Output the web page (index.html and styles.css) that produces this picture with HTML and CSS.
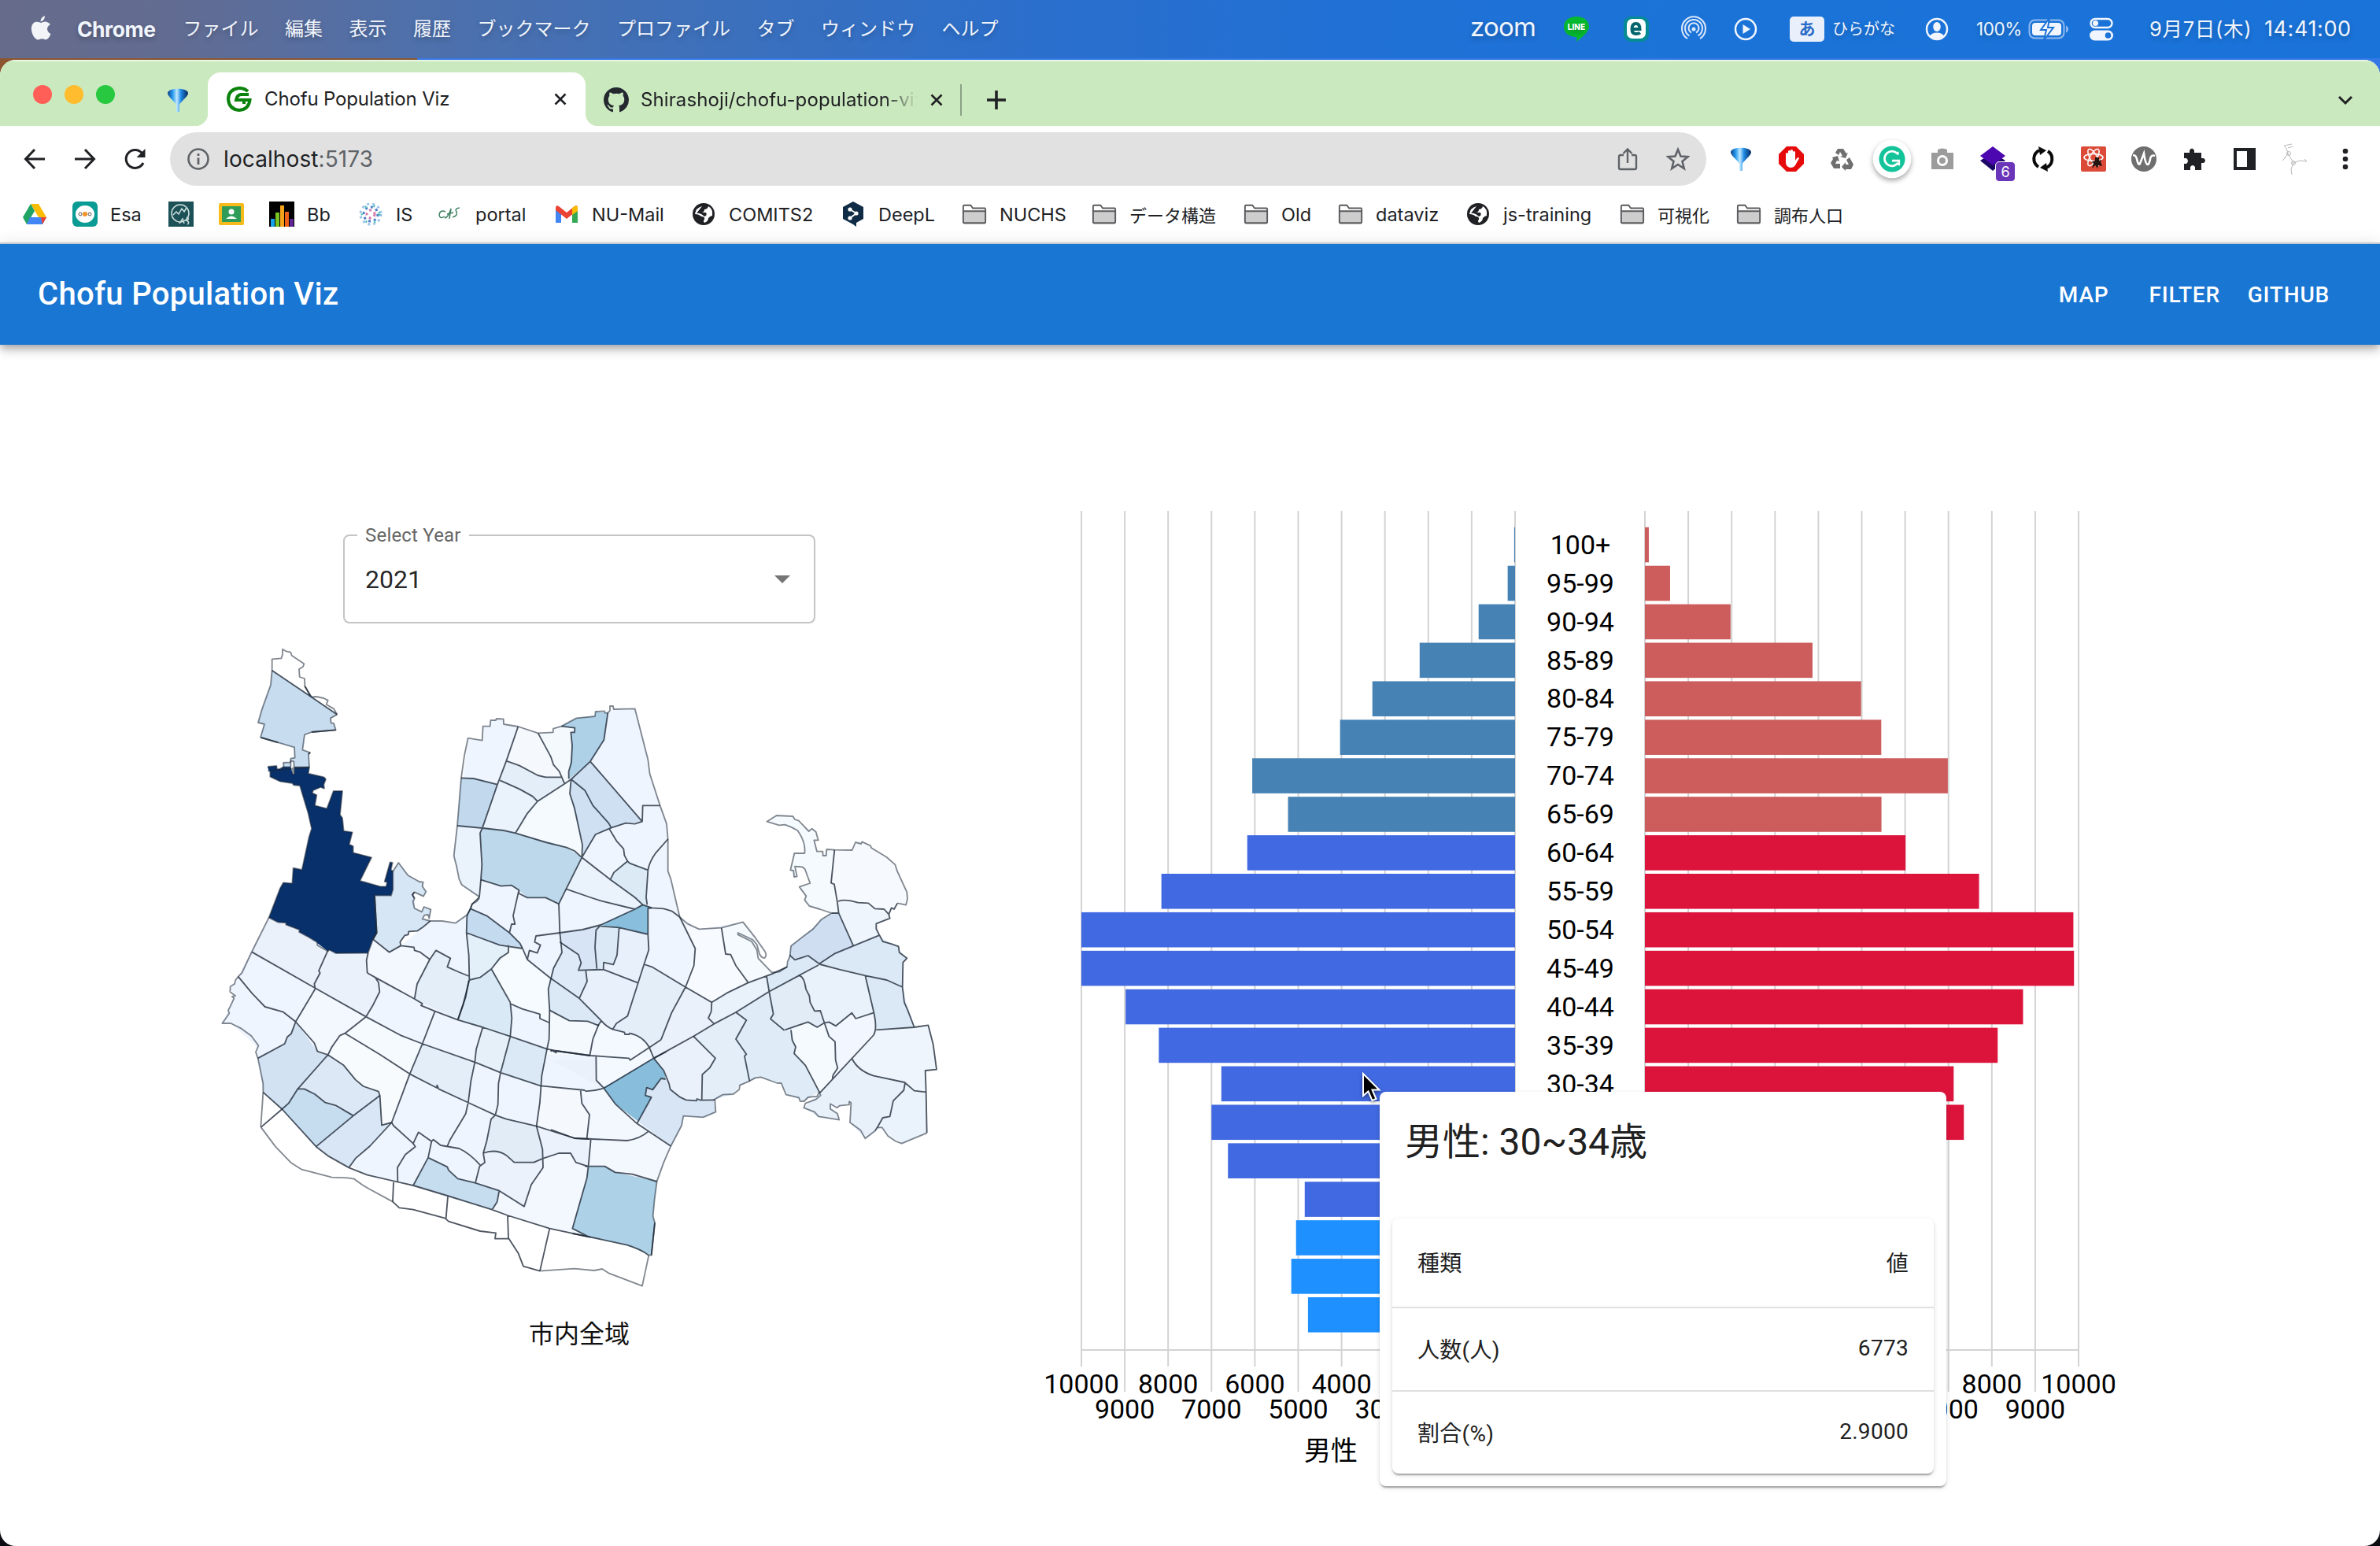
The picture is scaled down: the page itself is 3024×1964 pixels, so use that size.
FILE: index.html
```html
<!DOCTYPE html>
<html lang="ja">
<head>
<meta charset="utf-8">
<title>Chofu Population Viz</title>
<link rel="stylesheet" href="styles.css">
</head>
<body>
<svg width="0" height="0" class="defs">
  <defs>
    <linearGradient id="bal" x1="0" x2="1"><stop offset="0" stop-color="#0a3f86"/><stop offset=".25" stop-color="#2b9df0"/><stop offset=".45" stop-color="#bfe8ff"/><stop offset=".65" stop-color="#1f8ae6"/><stop offset="1" stop-color="#06265c"/></linearGradient>
    <symbol id="balloon" viewBox="0 0 32 32"><path d="M3 7C4 0 28 0 29 7C29.500 11 20 18 18 22V31H14V22C12 18 2.500 11 3 7Z" fill="url(#bal)"/></symbol>
    <symbol id="folder" viewBox="0 0 34 28"><path d="M2 24V3.500Q2 2 3.500 2H12L15 6H31Q32 6 32 7.500V24Q32 26 30 26H4Q2 26 2 24Z" fill="#fff" stroke="#5a5b5e" stroke-width="2"/><path d="M2 10H32V24Q32 26 30 26H4Q2 26 2 24Z" fill="#cdcdcd" stroke="#5a5b5e" stroke-width="2"/></symbol>
    <symbol id="globe" viewBox="0 0 30 30"><circle cx="15" cy="15" r="14" fill="#202124"/><path d="M13 5Q5 7 4 15Q9 15 12 18Q17 18 16 22Q14 23 16 26Q21 24 21 20Q24 17 26 17Q27 8 21 5Q20 9 16 9Q16 13 12 13H18Q20 17 16 18Q10 13 6 14" fill="#fff"/></symbol>
    <symbol id="x" viewBox="0 0 16 16"><path d="M1.500 1.500L14.500 14.500M14.500 1.500L1.500 14.500" stroke="#202124" stroke-width="2.600" fill="none"/></symbol>
  </defs>
</svg>

<header class="menubar">
  <nav class="menus">
    <svg class="apple" viewBox="0 0 26 32"><path d="M18 1Q18 7 12.500 8.500Q12.500 3 18 1ZM13 10Q15 9 18 8.500Q22 8.500 25 12Q21 14.500 21 18Q21.500 22 25.500 24Q23 31 19 31.500Q16 30.300 13.500 30.300Q10 31.500 8.500 31.500Q4 30 1.500 22Q-.5 13 4.500 9.500Q7.500 7.800 13 10Z" fill="#f2f4f8"/></svg>
    <b>Chrome</b><span>ファイル</span><span>編集</span><span>表示</span><span>履歴</span><span>ブックマーク</span><span>プロファイル</span><span>タブ</span><span>ウィンドウ</span><span>ヘルプ</span>
  </nav>
  <div class="status">
    <span class="zoomword">zoom</span>
    <svg width="34" height="34" viewBox="0 0 34 34"><path d="M17 1C26 1 33 6 33 14C33 22 20 30 17 33Q18 30 17 27C8 27 1 22 1 14C1 6 8 1 17 1Z" fill="#06b92f"/><text x="17" y="18" class="linetext">LINE</text></svg>
    <svg width="32" height="34" viewBox="0 0 32 34"><rect x="0" y="1" width="32" height="32" rx="9" fill="#058b93"/><rect x="4" y="4" width="24" height="25" rx="7" fill="#fff"/><path d="M10.500 17H20.500Q20.500 10 15.700 10Q10.500 10 10.500 17Q10.500 23 16 23Q19 23 20.800 21.500" fill="none" stroke="#04656c" stroke-width="4"/></svg>
    <svg width="34" height="34" viewBox="0 0 34 34" fill="none" stroke="#dde9fa" stroke-width="2"><path d="M9 29A15 15 0 1 1 25 29M11.500 25.500A11 11 0 1 1 22.500 25.500M14 21.500A6.500 6.500 0 1 1 20 21.500"/><circle cx="17" cy="17" r="2.500" fill="#dde9fa" stroke="none"/></svg>
    <svg width="30" height="30" viewBox="0 0 30 30"><circle cx="15" cy="15" r="13" fill="none" stroke="#f1f6fe" stroke-width="2.500"/><path d="M11.500 9L21 15L11.500 21Z" fill="#f1f6fe"/></svg>
    <span class="ime"><b>あ</b></span>
    <span class="imename">ひらがな</span>
    <svg width="30" height="30" viewBox="0 0 30 30"><circle cx="15" cy="15" r="13" fill="none" stroke="#f1f6fe" stroke-width="2.500"/><ellipse cx="15" cy="12" rx="4.800" ry="6" fill="#f1f6fe"/><path d="M6 24Q8 19.500 15 19.500Q22 19.500 24 24Q20 28 15 28Q10 28 6 24Z" fill="#f1f6fe"/></svg>
    <span class="pct">100%</span>
    <svg width="52" height="28" viewBox="0 0 52 28"><rect x="1.500" y="2.500" width="44" height="23" rx="7" fill="none" stroke="#8fb9ee" stroke-width="2"/><rect x="5" y="6" width="37" height="16" rx="4" fill="#f1f6fe"/><path d="M48 9.500Q51 11 51 14Q51 17 48 18.500Z" fill="#8fb9ee"/><path d="M27 0L16 15H23L20 28L32 12H25Z" fill="#f1f6fe" stroke="#1b72d7" stroke-width="2"/></svg>
    <svg width="30" height="30" viewBox="0 0 30 30"><rect x="1.500" y="2" width="27" height="11" rx="5.500" fill="none" stroke="#f1f6fe" stroke-width="2.400"/><circle cx="7.500" cy="7.500" r="3.600" fill="#f1f6fe"/><rect x="0" y="16.500" width="30" height="13" rx="6.500" fill="#f1f6fe"/><circle cx="23.500" cy="23" r="3.800" fill="#1b72d7"/></svg>
    <span class="date">9月7日(木)</span><span class="time">14:41:00</span>
  </div>
</header>
<div class="desktop"></div>

<section class="window">
  <div class="tabs">
    <div class="lights"><i class="r"></i><i class="y"></i><i class="g"></i></div>
    <svg class="pinned" width="32" height="32"><use href="#balloon"/></svg>
    <div class="tab">
      <svg width="32" height="32" viewBox="0 0 32 32" fill="none" stroke="#0c830c" stroke-width="4"><path d="M27 6Q22 1.500 15 2Q2 4 2 16Q3 29 16 30Q28 29 29.500 17H12Q13 11 18 10H28"/><path d="M22 17V22"/></svg>
      <span>Chofu Population Viz</span>
      <svg class="close" width="16" height="16"><use href="#x"/></svg>
    </div>
    <div class="tab2">
      <svg width="34" height="32" viewBox="0 0 16 16"><path d="M8 0C3.580 0 0 3.580 0 8c0 3.540 2.290 6.530 5.470 7.590.4.070.55-.17.55-.38 0-.19-.01-.82-.01-1.490-2.010.37-2.530-.49-2.690-.94-.09-.23-.48-.94-.82-1.130-.28-.15-.68-.52-.01-.53.63-.01 1.080.58 1.230.82.72 1.210 1.870.87 2.330.66.070-.52.28-.87.51-1.070-1.780-.2-3.640-.89-3.640-3.950 0-.87.31-1.590.82-2.150-.08-.2-.36-1.020.08-2.120 0 0 .67-.21 2.200.82.640-.18 1.320-.27 2-.27s1.360.09 2 .27c1.530-1.040 2.200-.82 2.200-.82.44 1.100.16 1.920.08 2.120.51.56.82 1.270.82 2.150 0 3.070-1.870 3.750-3.650 3.950.29.25.54.73.54 1.480 0 1.070-.01 1.930-.01 2.200 0 .21.15.46.55.38A8.010 8.010 0 0 0 16 8c0-4.420-3.580-8-8-8z" fill="#24292f"/></svg>
      <span class="fade">Shirashoji/chofu-population-viz</span>
      <svg class="close" width="16" height="16"><use href="#x"/></svg>
    </div>
    <svg class="plus" width="24" height="24" viewBox="0 0 24 24"><path d="M12 0V24M0 12H24" stroke="#202124" stroke-width="3.600"/></svg>
    <svg class="chev" width="20" height="14" viewBox="0 0 20 14"><path d="M2 3L10 11L18 3" fill="none" stroke="#202124" stroke-width="3"/></svg>
  </div>

  <div class="toolbar">
    <div class="navbtns">
      <svg viewBox="0 0 28 28"><path d="M27 14H3M14 2L2.500 14L14 26" /></svg>
      <svg viewBox="0 0 28 28"><path d="M1 14H25M14 2L25.500 14L14 26"/></svg>
      <svg viewBox="0 0 28 28"><path d="M24 19A11.500 11.500 0 1 1 22.500 6.500"/><path d="M26.500 1V12H15.500Z" fill="#202124" stroke="none"/></svg>
    </div>
    <div class="omnibox">
      <svg width="28" height="28" viewBox="0 0 28 28"><circle cx="14" cy="14" r="12.500" fill="none" stroke="#5f6368" stroke-width="2.600"/><path d="M14 12.500V21M14 7V10" stroke="#5f6368" stroke-width="2.800"/></svg>
      <span class="url">localhost<em>:5173</em></span>
      <svg class="share" width="26" height="30" viewBox="0 0 26 30" fill="none" stroke="#5f6368" stroke-width="2.400"><path d="M8 10H4Q2 10 2 12V26Q2 28 4 28H22Q24 28 24 26V12Q24 10 22 10H18M13 20V3M7.500 8L13 2.500L18.500 8"/></svg>
      <svg width="30" height="30" viewBox="0 0 30 30"><path d="M15 3L18.500 11.500L27.500 12.200L20.500 18L22.800 27L15 22L7.200 27L9.500 18L2.500 12.200L11.500 11.500Z" fill="none" stroke="#5f6368" stroke-width="2.600"/></svg>
    </div>
    <div class="exts">
      <svg viewBox="0 0 32 32"><use href="#balloon"/></svg>
      <svg viewBox="0 0 32 32"><path d="M10 0H22L32 10V22L22 32H10L0 22V10Z" fill="#e60a0a"/><path d="M9 16V9Q10.500 7 12 9V14V6Q13.500 4 15 6V14V5Q16.500 3 18 5V14V7Q19.500 5 21 7V18L23 15Q25 13 26 15L21 24Q19 27 15 27Q9 26 9 20Z" fill="#fff"/></svg>
      <svg viewBox="0 0 32 32" fill="#6f6f6f"><path d="M11 3H18L22 9L24 8L21 15L14 13L17 12L14 7L12 11L8 8ZM4 14L11 12L13 19L10 18L8 22H14V28H6L2 21L5 16ZM22 17L26 14L31 23L28 29H21V31L16 26L21 20V23H25Z"/></svg>
      <svg class="gram" viewBox="0 0 48 56"><circle cx="24" cy="28" r="23.500" fill="#fff"/><circle cx="24" cy="28" r="16" fill="#15c39a"/><path d="M30 21A9 9 0 1 0 31 33M24 30H32.500V36M31 23V19" fill="none" stroke="#fff" stroke-width="2.600"/></svg>
      <svg viewBox="0 0 32 32" fill="#9c9c9c"><path d="M2 8H10V4Q16 1 22 4V8H30V29H2Z"/><circle cx="16" cy="18" r="7" fill="#fff"/><circle cx="16" cy="18" r="4"/></svg>
      <span class="cube"><svg viewBox="0 0 32 32"><path d="M0 18L16 31L32 18L16 8Z" fill="#1d0764"/><path d="M0 12L16 0L32 12L16 24Z" fill="#4c07b0"/></svg><i>6</i></span>
      <svg viewBox="0 0 32 32" fill="none" stroke="#0a0a0a" stroke-width="4"><path d="M10 26A12 12 0 0 1 11 5M22 6A12 12 0 0 1 20 27"/><path d="M10 0L20 5L12 11ZM22 32L12 27L20 21Z" fill="#0a0a0a" stroke="none"/></svg>
      <svg viewBox="0 0 32 32"><rect width="32" height="32" rx="2" fill="#dc4a38"/><g fill="none" stroke="#fff" stroke-width="1.500"><ellipse cx="16" cy="14" rx="12" ry="4.500"/><ellipse cx="16" cy="14" rx="12" ry="4.500" transform="rotate(60 16 14)"/><ellipse cx="16" cy="14" rx="12" ry="4.500" transform="rotate(120 16 14)"/></g><path d="M18 14H23V18L26 17L25 20L27 25L22 24L21 28L18 24L14 28L16 21L13 20L18 18Z" fill="#24140f"/></svg>
      <svg viewBox="0 0 32 32"><circle cx="16" cy="16" r="16" fill="#6e6e6e"/><path d="M2 11Q6 11 7 16Q9 25 11 22L16 9Q18 23 21 23Q23 22 24 16Q25 10 30 12" fill="none" stroke="#fff" stroke-width="2.600"/></svg>
      <svg viewBox="0 0 32 32"><path d="M3 8H10V5Q13 0 16 5V8H25V15H28Q32 18 28 21H25V30H17V26Q14 22 11 26V30H3V22H6Q10 18.500 6 15H3Z" fill="#202124"/></svg>
      <svg viewBox="0 0 32 32"><path d="M2 2H30V30H2Z" fill="#202124"/><path d="M6 6H19V26H6Z" fill="#fff"/></svg>
      <svg class="mol" viewBox="0 0 32 40" fill="none" stroke="#b9b9b9" stroke-width="1"><path d="M2 20L7 13L5 6L2 3L7 2L12 1M7 13L14 25L22 22L31 23L28 20M14 25L11 33L12 40M7 6L13 4M0 22L4 18"/><circle cx="8" cy="13" r="2.500"/><circle cx="14" cy="25" r="2.500"/></svg>
      <svg viewBox="0 0 32 32" fill="#202124"><circle cx="16" cy="6" r="3.300"/><circle cx="16" cy="16" r="3.300"/><circle cx="16" cy="26" r="3.300"/></svg>
    </div>
  </div>

  <div class="bookmarks">
    <span><svg viewBox="0 0 32 32"><path d="M11 3H21L31 20H21Z" fill="#fbbc04"/><path d="M11 3L1 20L6 29L16 12Z" fill="#1fa463"/><path d="M10 20H31L26 29H6Z" fill="#4285f4"/><path d="M24 20H31L26 29Z" fill="#ea4335"/></svg></span>
    <span><svg viewBox="0 0 32 32"><rect width="32" height="32" rx="6" fill="#0a9b95"/><ellipse cx="16" cy="16" rx="12" ry="11" fill="#fff"/><circle cx="16" cy="16" r="3" fill="#f29225"/><circle cx="10" cy="16" r="2" fill="none" stroke="#555"/><circle cx="22" cy="16" r="2" fill="none" stroke="#555"/></svg>Esa</span>
    <span><svg viewBox="0 0 32 32"><rect width="32" height="32" fill="#1c5257"/><circle cx="15" cy="15" r="11" fill="none" stroke="#cfe0df" stroke-width="1.500"/><path d="M6 17L10 13L13 16L17 9L20 13L23 8M14 28L18 22L20 28M23 20Q28 22 23 24Q28 27 24 29" fill="none" stroke="#cfe0df" stroke-width="1.500"/></svg></span>
    <span><svg viewBox="0 0 32 32"><rect y="2" width="32" height="28" rx="2" fill="#f7bb1d"/><rect x="4" y="6" width="24" height="20" fill="#2f9d57"/><circle cx="16" cy="13" r="3.500" fill="#fff"/><path d="M9 22Q16 15 23 22Z" fill="#fff"/></svg></span>
    <span><svg viewBox="0 0 32 32"><rect width="32" height="32" fill="#000"/><path d="M2 22H7V32H2Z" fill="#14a2e8"/><path d="M8 14H13V32H8Z" fill="#7ac122"/><path d="M14 5H19V32H14Z" fill="#f6a21b"/><path d="M20 13H25V32H20Z" fill="#ec6115"/><path d="M26 22H31V32H26Z" fill="#602693"/></svg>Bb</span>
    <span><svg viewBox="0 0 32 32" fill="none" stroke-width="3" stroke-dasharray="3 4"><circle cx="16" cy="16" r="13" stroke="#9fc4ea"/><circle cx="16" cy="16" r="9" stroke="#4f7fca"/><circle cx="16" cy="16" r="5" stroke="#d87aa7"/><circle cx="16" cy="16" r="11" stroke="#58c0bb" stroke-dasharray="2 9"/></svg>IS</span>
    <span><svg viewBox="0 0 32 32" fill="none" stroke="#3b7f5e" stroke-width="1.500"><path d="M10 13Q3 10 2 17Q3 23 9 19M9 21Q14 20 17 9L15 22M12 16L20 14M28 8Q21 9 24 13Q26 18 19 20"/></svg>portal</span>
    <span><svg viewBox="0 0 32 32"><path d="M2 8V27H9V14Z" fill="#4285f4"/><path d="M30 8V27H23V14Z" fill="#34a853"/><path d="M2 8Q2 4 6 6L16 14L26 6Q30 4 30 8V11L16 22L2 11Z" fill="#ea4335"/><path d="M23 8L26 6Q30 4 30 8V12L23 17Z" fill="#fbbc04"/></svg>NU-Mail</span>
    <span><svg viewBox="0 0 32 32"><use href="#globe" x="1" y="1" width="30" height="30"/></svg>COMITS2</span>
    <span><svg viewBox="0 0 32 32"><path d="M16 0L29 7V22L20 27V32L16 29L3 22V7Z" fill="#0f2b46"/><path d="M12 10L20 15L12 21" fill="none" stroke="#fff" stroke-width="1.800"/><g fill="#fff"><circle cx="12" cy="10" r="2.600"/><circle cx="20" cy="15" r="2.600"/><circle cx="12" cy="21" r="2.600"/></g></svg>DeepL</span>
    <span><svg viewBox="0 0 34 28"><use href="#folder"/></svg>NUCHS</span>
    <span class="jp"><svg viewBox="0 0 34 28"><use href="#folder"/></svg>データ構造</span>
    <span><svg viewBox="0 0 34 28"><use href="#folder"/></svg>Old</span>
    <span><svg viewBox="0 0 34 28"><use href="#folder"/></svg>dataviz</span>
    <span><svg viewBox="0 0 32 32"><use href="#globe" x="1" y="1" width="30" height="30"/></svg>js-training</span>
    <span class="jp"><svg viewBox="0 0 34 28"><use href="#folder"/></svg>可視化</span>
    <span class="jp"><svg viewBox="0 0 34 28"><use href="#folder"/></svg>調布人口</span>
  </div>

  <div class="appbar">
    <h1>Chofu Population Viz</h1>
    <nav><a>MAP</a><a>FILTER</a><a>GITHUB</a></nav>
  </div>

  <main>
    <section class="mapcol">
      <fieldset class="select">
        <legend>Select Year</legend>
        <span>2021</span>
        <svg width="20" height="10" viewBox="0 0 20 10"><path d="M0 0H20L10 10Z" fill="#757575"/></svg>
      </fieldset>

      <svg class="map" viewBox="816 2400 2784 2580">
        <!-- district fills -->
        <g transform="translate(1680 2640)">
          <path fill="#eff5fe" d="M104 173L158 182L161 128L188 128L190 105L239 100L240 120L295 129L371 154L428 151L429 137L460 128L517 97L588 90L637 77L659 63L740 61L790 255L797 310L836 430L861 500L866 680L911 855L985 901L1152 874L1230 985L1205 960L1190 942L1133 915L1205 980L1210 1012L1262 1066L1320 1045L1335 965L1490 840L1517 840L1572 960L1668 920L1760 990L1760 1120L1805 1275L1858 1267L1877 1340L1890 1436L1847 1440L1853 1678L1757 1718L1705 1690L1682 1657L1618 1699L1560 1638L1564 1563L1510 1582L1485 1567L1519 1628L1460 1615L1384 1582L1445 1525L1364 1542L1296 1488L1220 1465L1176 1480L1075 1531L1040 1552L1048 1599L925 1615L877 1728L824 1862L500 2040L415 2042L-105 1878L-280 1838L-475 1730L-605 1587L-677 1523L-697 1393L-700 1350L-800 1260L-833 1260L-785 1150L-802 1130L-772 1082L-655 857L-430 960L-277 992L-152 964L-40 870L56 878L100 847L147 780L80 732L50 622Z"/>
        </g>
        <g transform="translate(810 2400)">
          <path fill="#c7dcef" d="M227 155L222 210L188 305L174 354L198 360L183 410L312 448L314 488L298 491V505L270 507L272 524H298V500L310 502L312 524H369L366 474L372 468L343 458L351 400L378 390L470 382L462 356H452L450 337L475 323L376 256Z"/>
          <path fill="#08306b" d="M210 522L244 519L246 532L258 530L270 523H298L306 550H312V525H369L365 548L425 562L432 570L424 590L426 605L412 600L384 612L380 622L397 630L390 670L436 682L461 615H495L486 705L495 718L500 767L533 772L521 818L536 825V850L606 868L562 957L640 979H662L666 962L656 960L677 886L686 888L680 915L688 920V990L681 1013H618L626 1155L612 1180L593 1232L470 1233L446 1220L440 1225L400 1203L398 1190L380 1180L360 1168L330 1152L332 1144L280 1124V1117L250 1115L215 1097L258 985L270 964L304 967L308 908L341 915L368 790L378 758L365 700L333 594L309 592L305 585L258 578L220 560V540L214 538Z"/>
          <path fill="#d7e6f4" d="M688 920L709 888L745 936L788 960L803 962L800 978L814 998L804 1016L770 1000L762 1010L770 1024V1062L798 1075L806 1056L832 1066L826 1100L822 1086L808 1088L800 1102L830 1110L800 1135L780 1148L748 1150L746 1162L733 1165L715 1190L718 1204L674 1229L612 1180L626 1155L618 1013H681L688 990Z"/>
          <path fill="#eaf1fb" d="M215 1097L250 1115L280 1124L380 1180L440 1225L390 1365L150 1227Z"/>
          <path fill="#eaf1fb" d="M446 1222L470 1233H593L587 1260L590 1308L635 1350L637 1380L585 1475L390 1365Z"/>
        </g>
        <g transform="translate(1680 2640)">
          <path fill="#c1d8ed" d="M78 325L125 327L216 350L160 512L63 507Z"/>
          <path fill="#f5f9fe" d="M295 129L371 154L472 347L460 325L370 315L250 260Z"/>
          <path fill="#f3f9fd" d="M371 154L428 151L429 137L460 128L511 134L510 151H496L501 200L488 328L472 347Z"/>
          <path fill="#aed1e7" d="M460 128L517 97L588 90L590 72L637 77L622 180L570 262L488 330L501 200L496 152H510L511 134Z"/>
          <path fill="#e3eef9" d="M250 260L370 315L462 325L472 347L369 414L226 334Z"/>
          <path fill="#f4fafe" d="M285 535L330 460L369 414L497 330L492 385L540 580L538 628L480 590Z"/>
          <path fill="#cfe0f3" d="M497 330L570 262L768 491L705 497L650 515L590 540L540 620V580L492 385Z"/>
          <path fill="#bdd8ea" d="M160 512L285 535L480 590L538 628L450 805L400 781H330L298 752L270 734L230 737L153 713L157 655L150 535Z"/>
          <path fill="#eaf2fc" d="M63 507L160 516L150 535L157 655L147 780L80 732L50 622ZM216 350L226 334L369 414L285 535L160 512Z"/>
          <path fill="#eaf2fc" d="M538 628L770 808L740 825L610 793L478 748Z"/>
          <path fill="#dceaf6" d="M712 642L790 676L783 780L787 808H770L645 715L660 685Z"/>
          <path fill="#c4daee" d="M113 823L175 850L262 915L302 955L312 975L225 962L98 915L100 850Z"/>
          <path fill="#e3eff9" d="M98 915L225 962L258 962V990L193 1053L150 1085L109 1095Z"/>
          <path fill="#dae9f6" d="M109 1095L150 1085L193 1053L265 1180L271 1240L265 1310L66 1245L85 1190Z"/>
          <path fill="#f5fbfe" d="M258 962L312 975L330 1017L415 1085L413 1257L378 1242V1225L265 1185L193 1053L258 990Z"/>
          <path fill="#89bedc" d="M610 885L740 825L770 808L805 820H790V921L680 895L610 890Z"/>
          <path fill="#d6e4f5" d="M454 915L540 903L610 885L592 905L588 970L595 1055H525L535 1030L525 998L458 955Z"/>
          <path fill="#dbe9f6" d="M610 885L680 895L672 1000L658 1036L621 1028L620 1055H595L588 970L592 905Z"/>
          <path fill="#deeaf7" d="M458 955L525 998L535 1030L525 1058H553L558 1100L528 1165L418 1085L430 1050L462 990Z"/>
          <path fill="#e8f0fb" d="M553 1058L620 1055L750 1105L712 1232L655 1283L612 1250L528 1165L558 1100ZM680 895L790 921L793 980L750 1105L620 1055L621 1028L658 1036L672 1000Z"/>
          <path fill="#dbe9f6" d="M418 1088L528 1165L612 1250L600 1268L560 1252H490L415 1210L410 1130Z"/>
          <path fill="#f3f9fd" d="M415 1212L490 1250L560 1252L600 1268L570 1350V1380H405Z"/>
          <path fill="#e3eef9" d="M775 1035L805 1045L933 1122L880 1220L840 1322L795 1352L780 1330L740 1302L655 1283L712 1232Z"/>
          <path fill="#f7fafe" d="M911 855L940 880L985 901L1070 896L1086 996L1105 998L1172 1105L1033 1180L933 1122L970 975Z"/>
          <path fill="#f5fafe" d="M1070 896L1152 874L1225 975L1133 918L1185 945L1205 980L1210 1012L1262 1070L1172 1105L1105 998L1086 996Z"/>
          <path fill="#e9f1fb" d="M1033 1180L1090 1145L1172 1105L1242 1080L1252 1140L1042 1262L1020 1240Z"/>
          <path fill="#dbe9f6" d="M1242 1080L1320 1045L1331 1000L1350 1018L1400 1002L1440 1038L1365 1078L1252 1140Z"/>
          <path fill="#e3eef8" d="M-18 982L37 1018L26 1047L107 1080L109 1095L85 1190L66 1245L-100 1167L-90 1110Z"/>
          <path fill="#eaf1fb" d="M933 1122L1033 1180L1020 1240L1042 1262L812 1393L613 1505L420 1400L560 1400L840 1322L880 1220Z"/>
        </g>
        <g transform="translate(810 3600)">
          <path fill="#d2e2f2" d="M317 294L388 375L400 407L440 420L325 550L265 627L193 563V530L173 433L275 378Z"/>
          <path fill="#dce8f5" d="M440 420L500 460L545 515L575 540L633 560L638 575L537 652L430 602L390 570L350 550H325Z"/>
          <path fill="#c6dcef" d="M325 550H350L390 570L430 602L537 652L395 770L265 627ZM822 812L895 847L900 860L935 892L1000 908L1093 938L1085 980L1065 1010L765 918Z"/>
          <path fill="#d9e6f5" d="M638 575L645 688L683 678L600 768L545 815L520 850L440 805L395 770L537 652Z"/>
          <path fill="#f7fbfe" d="M505 338L640 420L752 493L683 678L645 688L638 575L633 560L575 540L545 515L500 460L440 420L455 390L485 347Z"/>
          <path fill="#f5fafe" d="M585 275L720 347L800 378L752 493L505 338Z"/>
          <path fill="#e3eef9" d="M800 378L1000 448L975 600L752 493Z"/>
          <path fill="#dae9f5" d="M1135 350L1275 398L1250 538L1098 488Z"/>
          <path fill="#e5f0f9" d="M1030 315L1135 350L1098 488L1000 448L1005 400Z"/>
          <path fill="#f5f9fd" d="M1250 540L1410 557V610L1437 650L1430 740L1380 738L1235 692Z"/>
          <path fill="#e2ecf7" d="M1078 650L1235 692L1258 780V815L1225 830H1150L1120 803L1080 787L1032 795L1062 665Z"/>
          <path fill="#ebf2fc" d="M1032 795L1080 787L1120 803L1150 830L1225 830L1260 815V850L1215 915L1188 998L1093 938L1002 908L1038 830ZM1235 692L1380 738L1441 741L1430 845L1385 830L1365 797H1320L1260 815L1258 780Z"/>
          <path fill="#f3f7fe" d="M590 108L587 60L593 32L612 -20L674 29L718 4L768 10L828 57L780 150L770 207ZM1260 815L1320 795H1365L1385 830L1430 845L1427 900L1372 1082L1430 1113L1285 1082L1065 1010L1085 980L1093 938L1188 998L1215 915L1260 850ZM317 294L392 168L585 275L505 338L440 420L400 407Z"/>
          <path fill="#fff" d="M193 565L265 627L395 770L440 805L520 850L590 878L765 918L1125 1032L1285 1082L1440 1115L1580 1145L1662 1184L1640 1300L1500 1250L1248 1244L1185 1226L1130 1121H1077L1020 1092L712 1003L687 980L540 893L340 857L184 695Z"/>
        </g>
        <g transform="translate(2100 3600)">
          <path fill="#f3f9fe" d="M192 290L235 323L300 342Q350 350 375 392L302 440L148 423L160 360ZM172 423L302 440L375 392L392 433L200 545L173 517Z"/>
          <path fill="#88bddb" d="M200 545L392 433L430 480L437 513L420 510L388 553L365 545L360 575L383 582L328 682L245 607Z"/>
          <path fill="#d8e5f5" d="M437 513L455 552L490 580L515 592H620L628 638L580 658L505 653L498 690L457 768L328 682L383 582L360 575L365 545L388 553L420 510Z"/>
          <path fill="#add1e6" d="M143 845H205L245 868L310 875L404 903L395 970L389 1035L396 1060L383 1184L290 1145L143 1113L82 1082L137 890Z"/>
          <path fill="#eaf1fb" d="M392 433L543 349L627 433L605 470L577 495L575 592H515L455 552L430 480Z"/>
          <path fill="#e3eef9" d="M543 349L705 258L745 288L705 360L745 418L757 520L718 540L695 570L620 592H575L577 495L605 470L627 433Z"/>
          <path fill="#dfebf7" d="M705 258L830 180L848 265L837 283L890 328H915L933 385L928 412L970 460L1022 560L965 597L900 572L878 528L800 505L757 520L745 418L705 360L745 288Z"/>
          <path fill="#f3f7fe" d="M200 545L245 607L457 768L404 902L245 868L205 845L143 842L137 740L147 648L113 557Q170 560 200 545Z"/>
        </g>
        <g transform="translate(2580 2940)">
          <path fill="#f5fafe" d="M590 538L505 513L487 490L493 475L467 440L508 426L488 372L450 362L458 400L447 402L433 376L448 312H487Q492 270 460 225L412 203L343 191L380 168L442 171L503 228L515 218L539 262L523 265L534 305L557 321L571 297L601 299L588 425L600 430L617 540Z"/>
          <path fill="#f6f9fe" d="M601 299L668 300L681 270L706 268L832 355L877 460L873 509L841 502L808 545L755 523L690 500L615 495L588 425Z"/>
          <path fill="#eef5fd" d="M615 495L690 500L755 523L808 545L812 560L760 580L770 625L673 665L617 540Z"/>
          <path fill="#cfdff1" d="M430 700L435 665L500 615L550 565L590 538H617L673 665L543 733L500 702L450 718Z"/>
          <path fill="#dbe9f6" d="M545 733L673 665L770 625L785 648L845 667L848 690L877 712L862 728L860 822L800 795L718 778ZM718 778L800 795L860 822L867 880L905 975L760 985Z"/>
          <path fill="#e9f1fb" d="M465 778L543 735L718 778L750 920L682 942L667 920L606 970L563 958L547 912L525 913L505 855Z"/>
          <path fill="#e1ecf6" d="M350 843L465 778L492 830L525 913L547 912L563 958L535 975L500 955L412 988L357 943L370 925Z"/>
          <path fill="#f5fafe" d="M435 985L500 955L535 975L563 958L580 1010L603 1030L605 1100L613 1130L593 1172L545 1225L490 1120L447 1075L453 1050Z"/>
          <path fill="#f2f6fe" d="M563 958L606 970L667 920L682 942L750 920L760 970L750 1005L593 1172L613 1130L605 1100L603 1030L580 1010Z"/>
          <path fill="#eef5fd" d="M668 1095L750 1005L760 985L958 967L977 1040L990 1136L947 1140L950 1222L905 1217L868 1185L750 1160L690 1130Z"/>
          <path fill="#e8f0fa" d="M668 1095L690 1130L750 1160L868 1185L865 1215L825 1255L812 1315L785 1320L764 1357L718 1399L660 1338L664 1263L615 1274L585 1267V1286L612 1304L619 1328L540 1318L484 1282L545 1225Z"/>
          <path fill="#eaf2fc" d="M870 1187L905 1217L950 1222L953 1378L857 1418L782 1357L764 1357L785 1320L812 1315L825 1255L865 1215Z"/>
        </g>

        <!-- district boundaries: outer edge (o), shared borders (l) -->
        <g class="lines" transform="translate(810 2400)">
          <path class="o" d="M227 155V112L262 109L267 95V74L280 82L298 86L302 98L349 130L345 141L330 150L332 180L351 186L352 215L376 256L396 255L424 261L440 269L434 285L462 301L475 323"/>
          <path class="o" d="M227 155L222 210L188 305L174 354L198 360L183 410L312 448L314 488L298 491V505L270 507L272 524M369 524L366 474L372 468L343 458L351 400L378 390L470 382L462 356H452L450 337L475 323"/>
          <path class="l" d="M227 155L376 256L475 323M352 215L376 256M185 411L250 430M378 390L470 382M312 524H369M366 474L372 468"/>
          <path class="o" d="M210 522L244 519L246 532L258 530L270 523H298V500L310 502L312 550H306V525M369 524L365 548L425 562L432 570L424 590L426 605L412 600L384 612L380 622L397 630L390 670L436 682L461 615H495L486 705L495 718L500 767L533 772L521 818L536 825V850L606 868L562 957L640 979H662L666 962L656 960L677 886L686 888L680 915L688 920V990L681 1013H618L626 1155L612 1180L593 1232L470 1233L446 1220L440 1225L400 1203L398 1190L380 1180L360 1168L330 1152L332 1144L280 1124V1117L250 1115L215 1097L258 985L270 964L304 967L308 908L341 915L368 790L378 758L365 700L333 594L309 592L305 585L258 578L220 560V540L214 538Z"/>
          <path class="o" d="M688 920L709 888L745 936L788 960L803 962L800 978L814 998L804 1016L770 1000L762 1010L770 1024L764 1036L770 1062L798 1075L806 1056L832 1066L826 1100L822 1086L808 1088L800 1102L830 1110L875 1110L926 1118L970 1087L985 1060L990 1045L1008 1035L1017 1022M215 1097L150 1227"/>
          <path class="l" d="M830 1110L800 1135L780 1148L748 1150L746 1162L733 1165L715 1190L718 1204L674 1229L612 1180L626 1155L618 1013M718 1204L768 1210L770 1222L790 1228L828 1256M593 1232L587 1260L590 1308M770 1000L762 1010L770 1024"/>
        </g>
        <g class="lines" transform="translate(1680 2640)">
          <path class="o" d="M147 778L80 732L70 710L60 660L50 622L63 507L78 325L90 240L104 173L158 182L161 128H188L190 105H210L212 99L239 100L240 120L295 129L371 154L428 151L429 137L460 128L517 97L588 90L590 72L624 70L626 77H637L645 68V51H657L659 63L740 61L790 255L797 310L836 430L861 500L866 558V680L877 710L911 855L940 880L960 890L985 901L1070 896L1152 874L1200 935L1235 985Q1245 1000 1235 1011Q1222 1012 1215 995L1205 960L1190 942L1133 915V922L1185 948L1205 980L1210 1012L1262 1066L1290 1064L1320 1045L1322 1025L1331 1005L1335 965"/>
          <path class="l" d="M295 129L250 260L216 350L160 512M78 325L125 327L216 350M63 507L160 516L240 525L285 535L400 570L480 590L510 603L538 628L650 715L740 780L770 808L805 820L850 823L880 832L911 855M250 260L300 278L370 315L400 322H462M371 154L420 245L430 275L452 300L472 347M226 334L300 367L350 395L369 414M160 512L150 535L157 655L153 713L147 780M285 535L330 460L369 414L472 347L497 330L570 262L622 180L637 77M460 128L511 134L510 151H496L501 200L498 265L488 300V328M497 330L492 385L510 440L540 580L538 628M497 330L550 373L580 430L640 497L650 515M570 262L768 491L770 430H836M768 491L740 500L705 497L650 515L590 540L538 628L478 748L450 805L454 915L462 990L430 1050L410 1130L415 1210L413 1320L405 1358M643 520L670 565L697 595L700 620L712 642L720 650L790 676M712 642L660 685L645 715M866 558L820 610Q795 645 790 676L783 780L787 808"/>
          <path class="l" d="M153 713L230 737L270 734L298 752V765L330 781H400L450 805M298 752L276 850L283 882H270L262 915M478 748L570 780L610 793L740 825M147 780L120 805L113 823L175 850L262 915L302 955L312 975L330 1017L415 1085L528 1165L612 1250Q630 1272 655 1283L700 1294L702 1302H718L720 1298Q770 1308 795 1352M113 823L100 850L98 915L107 1000L109 1095L85 1190L66 1245M98 915L225 962L312 975M258 962V990L225 1012L193 1053L150 1085L109 1095M193 1053L265 1180L271 1240L265 1310M330 1017L338 982L368 992L380 962L358 950L363 927L454 915L540 903L610 885L740 825L770 808M610 890L680 895L790 921M610 885L592 905L588 970L595 1052M680 895L672 1000L658 1036L621 1028L620 1055M805 820L790 822V921L793 980L775 1035L712 1232L670 1260L655 1283M454 950L525 998L535 1030L525 1058L620 1055L750 1105M553 1060L558 1100L528 1165M775 1035L805 1045L933 1122L1033 1180M911 855L970 975L965 1040L933 1122L880 1220L840 1322M1070 896L1086 996L1105 998L1125 1040L1172 1105M1033 1180L1090 1145L1172 1105L1262 1072L1320 1045M1033 1180L1031 1215L1020 1240L1042 1262M812 1393L966 1308L1042 1262L1125 1218L1250 1140L1365 1078L1440 1038M1242 1080L1252 1140L1268 1225L1257 1243L1310 1287M265 1185L310 1205L378 1225V1242L413 1257M415 1210L490 1250L560 1252L600 1268L612 1250"/>
        </g>
        <g class="lines" transform="translate(810 3600)">
          <path class="o" d="M1290 1241L1248 1244M687 980L595 930L570 915L540 893L515 889L455 887L340 857L300 832L240 770L184 695L193 563V530L173 433L165 410L175 385L148 348L110 320L70 300H37L50 282L64 262L60 250L68 235L82 205L75 198L87 195L67 180L68 160L84 150L88 135L98 122L112 108L150 27"/>
          <path class="l" d="M1248 1244L1185 1226L1165 1175L1130 1121H1077L1080 1099L1020 1092L900 1055L887 1043L765 1010L712 1003L687 980M150 28L390 165L585 275L720 347L800 378L1000 448L1098 488L1250 538L1420 555M98 122L150 185L200 237L270 257L317 294M440 22L405 100L410 108L388 150L392 168L317 294L300 340L285 352L275 378L173 433M317 294L388 375L400 407L440 420L500 460L545 515L575 540L633 560L638 575L645 688L683 678M585 275L505 338L485 347L455 390L440 420L325 550L290 605L265 627L186 695M590 108L620 125L770 207L800 225L795 232L848 254L935 287L1030 315L1135 350L1275 398L1310 405L1440 423M620 125L633 145L637 180L612 230L585 275M828 57L780 150L770 207M828 57L852 22L907 52L895 85L940 105L977 120M977 137L965 200L935 287M1135 350L1098 488L1090 530L1088 610L1078 650L1062 665L1045 750L1032 795M848 254L800 378L752 493L683 678M505 338L640 420L752 493L855 546L856 536L862 550L970 600L1078 650L1120 665L1235 692L1380 738L1437 741M1030 315L1005 400L1000 448L985 520L975 600L965 645L905 745L895 768"/>
          <path class="l" d="M1275 398L1255 500L1248 600L1235 692L1258 780L1260 850L1215 915L1188 998L1093 938M193 563L265 627L395 770L440 805L520 850L590 878L765 918L895 957L1065 1010L1125 1032L1285 1082L1440 1115M325 550H350L390 570L430 602L470 613L537 652M638 575L537 652L395 770M683 678L600 768L545 815L520 850M683 678L690 690L765 758L773 770L735 800L705 850L706 905M765 758L785 715L835 750L822 812L765 918M835 750L842 743L870 765L940 777Q980 795 1022 842M822 812L895 847L900 860L935 892L1000 908L1093 938L1085 980L1065 1012M1032 795L1038 830L1018 845L1002 908M1032 795Q1080 777 1120 803L1150 830H1225L1260 815L1320 795H1365L1385 830L1430 845M690 905L687 980M897 960L890 1043M1125 1032L1128 1120M1285 1082L1248 1244"/>
        </g>
        <g class="lines" transform="translate(2100 3600)">
          <path class="o" d="M620 592L655 572L695 570L718 552L720 536L757 520L778 508L800 505L863 528H878L896 572L945 583L950 597H965L980 582L1015 578L1022 562L1028 575L1010 590L970 605L964 622L1005 638L1020 655L1040 658L1099 668L1092 644L1065 626V607L1090 622L1100 614L1137 610V598L1144 603L1140 678L1180 707L1198 739L1235 710M625 592L628 638L580 658L505 653L498 690L457 768L430 830L404 902L395 970L389 1035L396 1060L383 1184H373L348 1301L220 1252L195 1236L165 1242L90 1235L0 1241"/>
          <path class="l" d="M0 408L2 402L20 412V405L150 423L297 433L302 440L375 392L420 362M182 305L160 360L148 423M172 423L173 517L200 545L245 607L328 682L457 768M130 558Q170 560 205 545L392 433M392 433L440 408M328 682L383 582L360 575L365 545L388 553L420 510L437 513M375 392L392 433L430 480L450 530L455 552L490 580L515 592L555 595L557 588L570 593L625 592M543 349L627 433L605 470L577 495L575 595M705 258L745 288L705 360L745 418L738 425L757 520M0 705L90 738L290 747Q340 740 370 713M152 742L143 842L137 890L82 1082L143 1113M130 845H205L245 868L310 875L404 903M82 1101L143 1113L290 1145Q340 1160 373 1184M113 557L118 605L147 648L137 740M396 1060L383 1184"/>
        </g>
        <g class="lines" transform="translate(2580 2940)">
          <path class="o" d="M435 665L500 615L520 600L550 565L590 540L545 525L505 513L487 490L493 475L467 440L508 426L488 372L478 364L450 362L458 400L447 402L445 378L433 376L448 312H487Q492 270 460 225L435 212L412 203L390 205L343 191L380 168L442 171L450 183L465 188L503 228L515 218L530 230L539 262H523L534 305H556L557 321H569L571 297L601 299L668 300L681 270L702 276L706 268L738 283L742 292L800 327L832 355L840 380L877 460L879 487L873 509L841 502M953 1378L900 1400L857 1418L835 1410L805 1390L782 1357L764 1357"/>
          <path class="l" d="M841 502L828 525L818 520L808 545L812 560L760 580V600L770 620L785 648L820 658L845 667L848 690L877 712L862 728L860 822L867 880L880 910L905 975L958 967L977 1040L990 1136L947 1140L950 1222L953 1378M764 1357L755 1370M617 540L673 665M590 540H617L612 500L600 430L588 425L601 299M615 495Q640 485 690 500L730 502L755 523L790 525L808 545M430 700L450 718L500 702L545 735L620 755L718 778L800 795L860 822M540 735L600 695L673 665L770 625M718 778L750 915Q765 980 750 1005L545 1225M760 985L905 975M465 778Q485 780 492 830L505 855L508 880L525 913L547 912L563 960L580 1010L603 1030L605 1100L613 1130L595 1158L593 1172M412 985L500 955L535 975L563 958L580 955L606 970L667 920L682 942L750 920M435 985L440 1025L453 1050L447 1075L490 1120L545 1225M668 1095Q690 1140 750 1160L868 1185L905 1217L950 1222M870 1187L865 1215L825 1255L812 1315L785 1320L764 1357"/>
        </g>
      </svg>
      <p class="area">市内全域</p>
    </section>
    <svg id="pyramid" class="pyramid" viewBox="1300 648 1450 1300"></svg>
  </main>
</section>

<aside class="tooltip">
  <h2>男性: 30~34歳</h2>
  <div class="paper">
    <div><span>種類</span><span>値</span></div>
    <div><span>人数(人)</span><span>6773</span></div>
    <div><span>割合(%)</span><span>2.9000</span></div>
  </div>
</aside>
<svg class="cursor" width="28" height="40" viewBox="0 0 28 40"><path d="M2 2V30L8.500 24.500L13.500 36L18.500 34L13.500 22.500H22.500Z" fill="#000" stroke="#fff" stroke-width="2"/></svg>
<script src="chart.js"></script>
</body>
</html>
```
FILE: styles.css
```css
* { box-sizing: border-box; }
body { margin: 0; width: 3024px; height: 1964px; overflow: hidden; background: #0b0b12; font-family: Roboto, "Noto Sans CJK JP", sans-serif; position: relative; }
.defs { position: absolute; }
svg { display: block; flex: none; }

.menubar { height: 74px; display: flex; justify-content: space-between; align-items: center; background: linear-gradient(90deg, #666b8a 0, #626c92 220px, #4f70aa 520px, #3d70bb 900px, #2c6fcb 1280px, #2170d5 1700px, #1b73d8 2150px, #1a73d9 100%); color: #f1f5fc; font: 24px/34px Inter, "Noto Sans CJK JP", sans-serif; padding-left: 39px; text-shadow: 0 3px 6px rgba(0,0,0,.25); }
.menus { display: flex; align-items: center; gap: 34px; white-space: nowrap; }
.menus b { width: 102px; margin: 0 -1px; font-size: 26.500px; letter-spacing: -.5px; }
.menus span { margin-left: -.5px; }
.apple { width: 26px; height: 32px; margin-top: -4px; }
.status { display: grid; grid-template-columns: 118px 77px 72px 68px 71px 54px 118px 65px 66px 78px 76px 146px 147px; align-items: center; white-space: nowrap; }
.zoomword { font-size: 33px; letter-spacing: -.8px; margin-top: -6px; }
.linetext { font: 800 10px Inter, sans-serif; fill: #fff; text-anchor: middle; }
.ime { width: 44px; height: 32px; border-radius: 5px; background: #e9f0fb; color: #2b6cc6; font-size: 21px; line-height: 31px; text-align: center; text-shadow: none; }
.imename { font-size: 20px; }
.pct { font-size: 22.500px; letter-spacing: -.4px; }
.date { font-size: 25.500px; letter-spacing: .7px; }
.time { font-size: 27px; letter-spacing: .6px; }

.desktop { height: 20px; margin-bottom: -18px; background: linear-gradient(90deg, #8b562f 0 530px, #3478e6 530px); }
.window { position: relative; height: 1888px; border-radius: 20px; overflow: hidden; background: #fff; display: flex; flex-direction: column; font-family: Inter, "Noto Sans CJK JP", sans-serif; color: #202124; }
.tabs { height: 84px; background: #cbe9bf; border-top: 2px solid #e9f6e3; display: flex; align-items: center; padding-left: 42px; font-size: 24px; letter-spacing: -.15px; }
.tabs span { margin-top: -2px; }
.lights { display: flex; gap: 16px; margin-top: 2px; }
.lights i { width: 24px; height: 24px; border-radius: 50%; }
.r { background: #ff5f57; }
.y { background: #febc2e; }
.g { background: #28c840; }
.pinned { margin: 16px 22px 0 64px; }
.tab { position: relative; align-self: flex-end; width: 480px; height: 68px; border-radius: 16px 16px 0 0; background: #fff; display: flex; align-items: center; gap: 16px; padding: 0 24px; }
.tab::before, .tab::after { content: ""; position: absolute; bottom: 0; width: 16px; height: 16px; }
.tab::before { left: -16px; background: radial-gradient(circle at 0 0, #cbe9bf 16px, #fff 16.500px); }
.tab::after { right: -16px; background: radial-gradient(circle at 100% 0, #cbe9bf 16px, #fff 16.500px); }
.close { margin-left: auto; }
.tab2 { align-self: flex-end; width: 478px; height: 40px; margin-bottom: 13px; border-right: 2px solid #8ba184; display: flex; align-items: center; padding: 0 22px 0 22px; gap: 14px; }
.fade { width: 352px; overflow: hidden; white-space: nowrap; letter-spacing: .1px; -webkit-mask-image: linear-gradient(90deg, #000 88%, transparent 100%); mask-image: linear-gradient(90deg, #000 88%, transparent 100%); }
.plus { margin: 16px 0 0 32px; }
.chev { margin: 16px 34px 0 auto; }

.toolbar { height: 76px; padding-top: 8px; display: flex; align-items: center; }
.navbtns { width: 216px; display: flex; gap: 36px; padding-left: 30px; }
.navbtns svg { width: 28px; height: 28px; fill: none; stroke: #202124; stroke-width: 3; }
.omnibox { width: 1952px; height: 68px; border-radius: 34px; background: #e1e1e1; display: flex; align-items: center; padding: 0 21px 0 22px; font-size: 28px; letter-spacing: .1px; }
.url { margin-left: 18px; }
.url em { font-style: normal; color: #5f6368; }
.share { margin: 0 36px 0 auto; }
.exts { display: grid; grid-template-columns: repeat(13, 64px); justify-items: center; align-items: center; margin-left: 12px; }
.exts svg { width: 32px; height: 32px; }
.exts .gram { width: 50px; height: 58px; filter: drop-shadow(0 3px 3px rgba(0,0,0,.35)); }
.exts .mol { height: 40px; }
.cube { position: relative; }
.cube i { position: absolute; left: 19px; top: 19px; width: 26px; height: 26px; border: 1px solid #fff; border-radius: 5px; background: #6a35b8; color: #fff; font: 18px/25px Inter, sans-serif; text-align: center; }

.bookmarks { height: 72px; display: grid; grid-template-columns: 64px 122px 64px 64px 113px 101px 148px 174px 190px 154px 165px 193px 120px 162px 196px 148px 200px; align-items: center; padding-left: 28px; font-size: 23.500px; }
.bookmarks span { display: flex; align-items: center; gap: 16px; white-space: nowrap; }
.bookmarks .jp { font-size: 22px; }
.bookmarks svg { width: 32px; height: 32px; }

.appbar { position: relative; height: 130px; border-top: 2px solid #c5cad0; background: #1976d2; color: #fff; font-family: Roboto, sans-serif; display: flex; justify-content: space-between; align-items: center; padding: 0 48px; box-shadow: 0 4px 8px -2px rgba(0,0,0,.2), 0 8px 10px rgba(0,0,0,.14), 0 2px 20px rgba(0,0,0,.12); }
.appbar h1 { margin: -2px 0 0; font-size: 40px; font-weight: 500; letter-spacing: .3px; }
.appbar nav { display: flex; }
.appbar a { min-width: 128px; padding: 0 16px; text-align: center; font-size: 28px; font-weight: 500; letter-spacing: .8px; }

main { display: flex; gap: 100px; padding: 210px 0 0 272px; font-family: Roboto, "Noto Sans CJK JP", sans-serif; }
.mapcol { width: 928px; padding-top: 18px; }
.select { width: 600px; height: 126px; margin: 0 auto; min-width: 0; border: 2px solid #c4c4c4; border-radius: 8px; padding: 0 30px 12px 26px; display: flex; justify-content: space-between; align-items: center; font-size: 32px; color: rgba(0,0,0,.87); }
.select legend { margin-left: -10px; padding: 0 10px; font-size: 24px; line-height: 28px; letter-spacing: .2px; color: #666; }
.map { width: 928px; height: 860px; margin-top: 8px; }
.lines { fill: none; stroke: #1c2734; stroke-width: 5.500; stroke-linejoin: round; }
.l { stroke-opacity: .78; }
.o { stroke-opacity: .55; }
.area { margin: 2px 0 0; text-align: center; font-size: 32px; line-height: 66px; color: #111; }
.pyramid { width: 1450px; height: 1300px; }
.pyramid text { font: 34px Roboto, "Noto Sans CJK JP", sans-serif; text-anchor: middle; fill: #000; }
.grid { stroke: #d3d3d3; stroke-width: 2; }

.tooltip { position: absolute; left: 1753px; top: 1387px; width: 720px; height: 501px; border-radius: 8px; background: #fff; padding: 0 16px; color: #212121; box-shadow: 0 4px 2px -2px rgba(0,0,0,.2), 0 2px 2px rgba(0,0,0,.14), 0 2px 6px rgba(0,0,0,.12); }
.tooltip h2 { margin: 0; height: 161px; padding: 32px 16px; font-size: 48px; line-height: 64px; font-weight: 400; }
.paper { height: 324px; border-radius: 8px; box-shadow: 0 4px 2px -2px rgba(0,0,0,.2), 0 2px 2px rgba(0,0,0,.14), 0 2px 6px rgba(0,0,0,.12); font-size: 28px; letter-spacing: .3px; }
.paper div { height: 106px; display: flex; justify-content: space-between; align-items: center; padding: 0 32px 3px; border-bottom: 2px solid #e0e0e0; }
.paper div:first-child { height: 114px; }
.paper div:last-child { height: 104px; border: 0; }
.cursor { position: absolute; left: 1730px; top: 1362px; filter: drop-shadow(0 2px 2px rgba(0,0,0,.4)); }
```
FILE: chart.js
```js
// Population pyramid: men grow to the left, women to the right.
const men = [20, 170, 840, 2200, 3290, 4035, 6060, 5235, 6175, 8155, 10000, 10000, 8980, 8215, 6773, 7000, 6620, 4850, 5050, 5160, 4775];
const women = [90, 580, 1975, 3865, 4985, 5450, 6985, 5455, 6010, 7705, 9880, 9895, 8720, 8135, 7120, 7355, 6500, 4600, 4700, 4900, 4500];
const LEFT = 1925, RIGHT = 2090, UNIT = 55.1 / 1000, TOP = 669.8, PITCH = 48.91;
// The open tooltip covers the middle of the chart; labels behind it are left out.
const LAST_AGE = 14, FIRST_MEN_TICK = 3, FIRST_WOMEN_TICK = 7;
const out = [];

for (let k = 0; k <= 10; k++) {
  const end = k % 2 ? 1768 : 1736;
  for (const [x, first] of [[LEFT - k * 55.1, FIRST_MEN_TICK], [RIGHT + k * 55.1, FIRST_WOMEN_TICK]]) {
    out.push(`<line class="grid" x1="${x}" x2="${x}" y1="649" y2="${end}"/>`);
    if (k >= first) out.push(`<text x="${x}" y="${k % 2 ? 1802 : 1770}">${k * 1000}</text>`);
  }
}
out.push(`<line class="grid" x1="1374" x2="1925" y1="1715" y2="1715"/><line class="grid" x1="2090" x2="2641" y1="1715" y2="1715"/>`);

for (let i = 0; i < 21; i++) {
  const y = TOP + i * PITCH;
  const band = i < 8 ? 0 : i < 18 ? 1 : 2;
  const m = ["#4682b4", "#4169e1", "#1e90ff"][band];
  const w = ["#cd5c5c", "#dc143c", "#ff69b4"][band];
  out.push(`<rect x="${LEFT - men[i] * UNIT}" y="${y}" width="${men[i] * UNIT}" height="44.6" fill="${m}"/>`);
  out.push(`<rect x="${RIGHT}" y="${y}" width="${women[i] * UNIT}" height="44.6" fill="${w}"/>`);
  const from = 100 - i * 5;
  if (i <= LAST_AGE) out.push(`<text x="2008" y="${y + 34}">${i ? `${from}-${from + 4}` : "100+"}</text>`);
}
out.push(`<text x="1691" y="1855">男性</text>`);
document.getElementById("pyramid").innerHTML = out.join("");
```
